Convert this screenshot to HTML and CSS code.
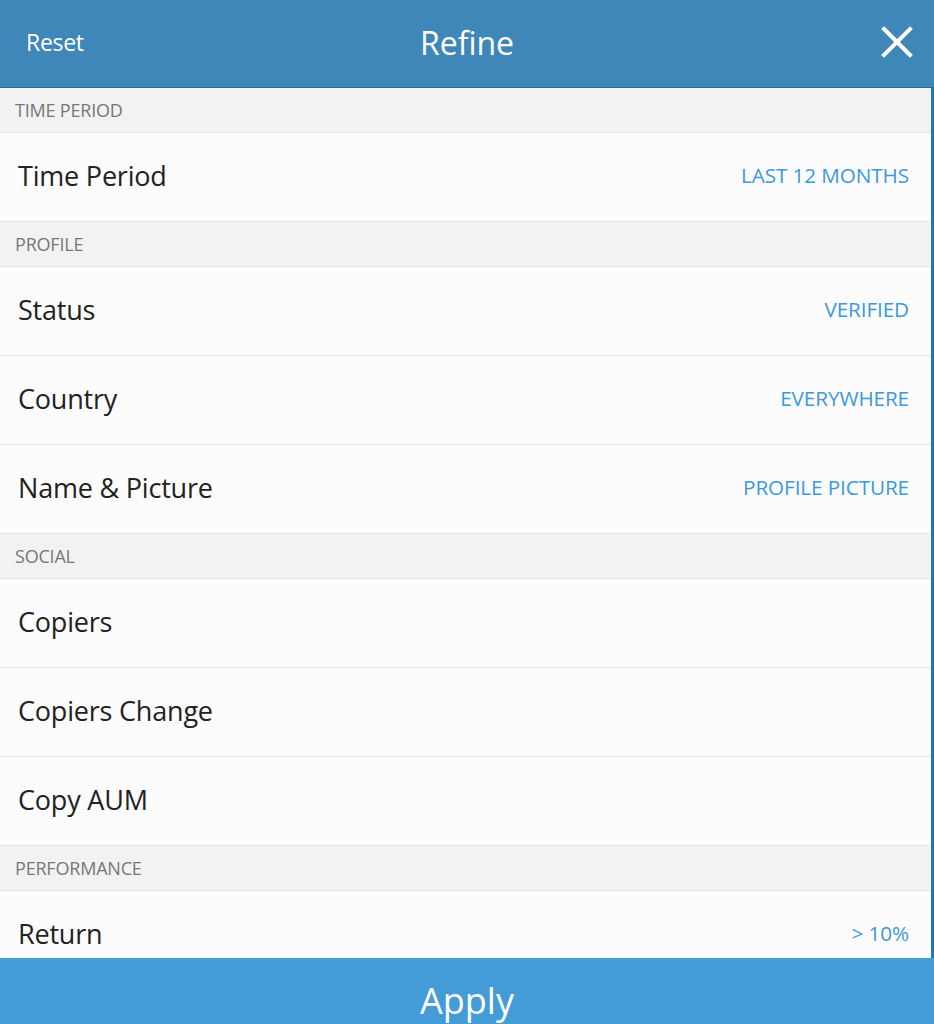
FILE: index.html
```html
<!DOCTYPE html>
<html>
<head>
<meta charset="utf-8">
<link rel="stylesheet" href="styles.css">
</head>
<body>
<div class="page">
  <header class="topbar">
    <span class="reset">Reset</span>
    <span class="title">Refine</span>
    <svg class="close" width="32" height="32" viewBox="0 0 32 32"><path d="M3 3 L29 29 M29 3 L3 29" stroke="#fff" stroke-width="4" stroke-linecap="square" fill="none"/></svg>
  </header>
  <main class="list">
    <div class="section">TIME PERIOD</div>
    <div class="row"><span class="label">Time Period</span><span class="value">LAST 12 MONTHS</span></div>
    <div class="section">PROFILE</div>
    <div class="row"><span class="label">Status</span><span class="value">VERIFIED</span></div>
    <div class="row"><span class="label">Country</span><span class="value">EVERYWHERE</span></div>
    <div class="row"><span class="label">Name &amp; Picture</span><span class="value">PROFILE PICTURE</span></div>
    <div class="section">SOCIAL</div>
    <div class="row"><span class="label">Copiers</span></div>
    <div class="row"><span class="label">Copiers Change</span></div>
    <div class="row"><span class="label">Copy AUM</span></div>
    <div class="section">PERFORMANCE</div>
    <div class="row"><span class="label">Return</span><span class="value">&gt; 10%</span></div>
    <div class="row"><span class="label">Risk Score</span></div>
  </main>
  <footer class="apply">Apply</footer>
</div>
</body>
</html>
```

FILE: styles.css
```css
html, body {
  margin: 0;
  padding: 0;
  height: 1024px;
  overflow: hidden;
}
body {
  font-family: "Open Sans", "Noto Sans", sans-serif;
  background: #fcfcfc;
}
.page {
  display: flex;
  flex-direction: column;
  height: 1042px;
}
.topbar {
  flex: 0 0 88px;
  box-sizing: border-box;
  display: flex;
  align-items: center;
  justify-content: space-between;
  padding: 0 21px 3px 26px;
  background: #3f87b8;
  border-bottom: 1px solid #2c6790;
  position: relative;
}
.reset {
  color: #fff;
  font-size: 23px;
  letter-spacing: -0.3px;
}
.title {
  position: absolute;
  left: 0;
  right: 0;
  top: 0;
  bottom: 3px;
  display: flex;
  align-items: center;
  justify-content: center;
  color: #fff;
  font-size: 32px;
  pointer-events: none;
}
.close {
  width: 32px;
  height: 32px;
}
.list {
  flex: 1 1 auto;
  overflow: hidden;
  border-right: 3px solid #1f78b9;
}
.section {
  height: 44px;
  display: flex;
  align-items: center;
  padding-left: 15px;
  background: #f2f2f2;
  border-bottom: 1px solid #e4e4e4;
  color: #777;
  font-size: 18px;
  letter-spacing: -0.2px;
}
.row {
  height: 89px;
  box-sizing: border-box;
  display: flex;
  align-items: center;
  justify-content: space-between;
  padding: 0 22px 4px 18px;
  background: #fcfcfc;
  border-bottom: 1px solid #e6e6e6;
}
.label {
  color: #222;
  font-size: 27px;
  letter-spacing: -0.2px;
}
.value {
  color: #3d9ad9;
  font-size: 20.7px;
  letter-spacing: -0.1px;
}
.apply {
  flex: 0 0 84px;
  display: flex;
  align-items: center;
  justify-content: center;
  background: #439bd8;
  color: #fff;
  font-size: 36px;
}
```
